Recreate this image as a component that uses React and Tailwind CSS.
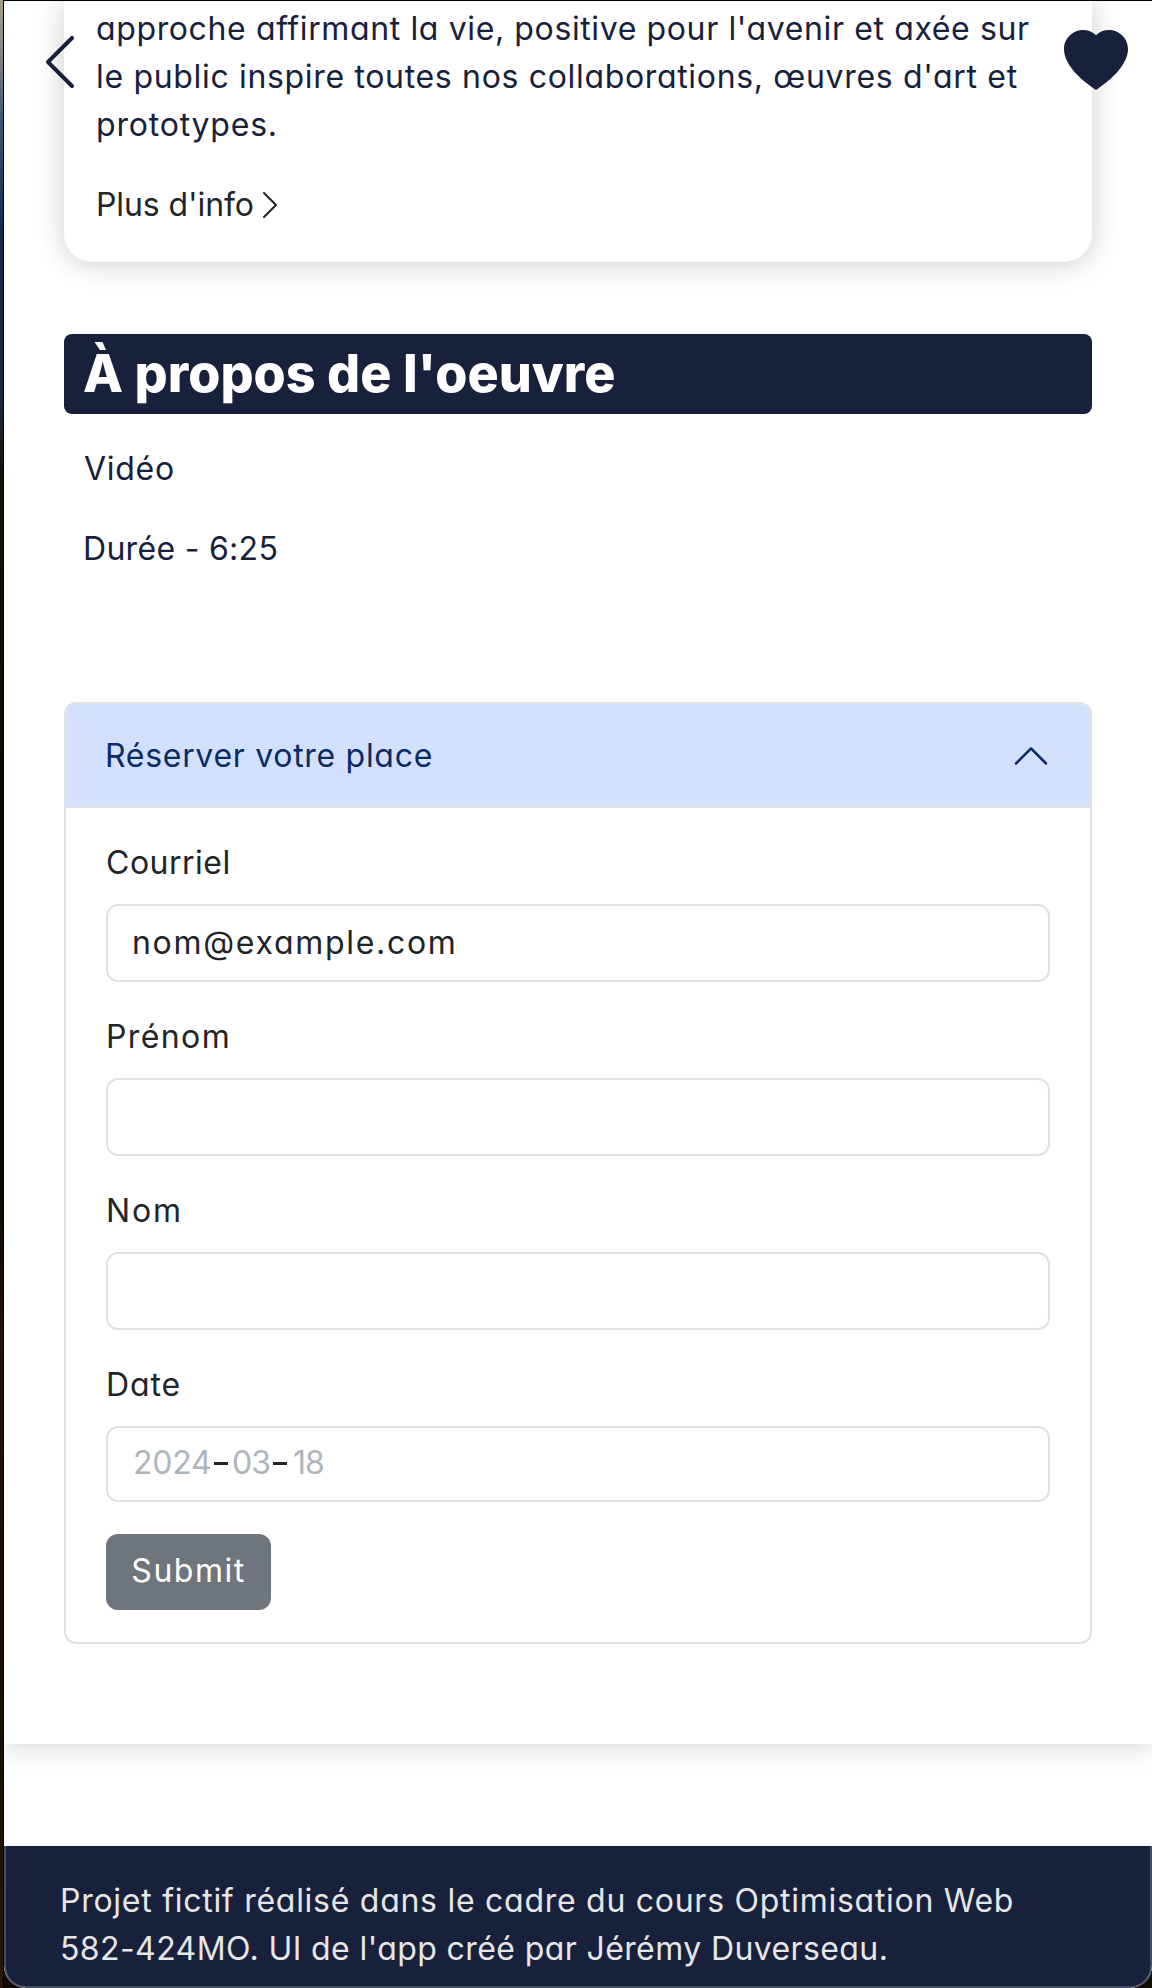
import { BsChevronLeft, BsChevronRight, BsChevronUp, BsHeartFill } from 'react-icons/bs'

function Field({ label, labelClass, children }) {
  return (
    <div className="mb-[31px]">
      <div className={`mb-[17px] ${labelClass}`}>{label}</div>
      <div className="flex h-[78px] items-center rounded-xl border-2 border-[#dee2e6] pl-[25px]">{children}</div>
    </div>
  )
}

export default function App() {
  return (
    <div className="relative flex h-[1988px] w-[1152px] overflow-hidden bg-[#120c06] font-['Inter',sans-serif] text-[32px] leading-[48px] whitespace-nowrap text-[#212529] [font-feature-settings:'cv11']">
      <div className="w-[3px] shrink-0 bg-[linear-gradient(#a39c8c_0px,#8d8a84_45px,#3d5578_120px,#17284e_230px,#1d2740_400px,#14140c_470px,#0b0a02_800px,#0d0a04_1200px,#24120b_1330px,#161104_1750px,#2a160b_1988px)]" />
      <div className="w-px shrink-0 bg-black" />
      <div className="flex w-[1148px] flex-col overflow-hidden rounded-b-[22px] border-t border-black bg-white">
        <main className="h-[1743px] shrink-0 px-[60px] shadow-[0_2px_26px_rgba(0,0,0,0.18)]">
          <section className="h-[261px] w-[1028px] rounded-b-[28px] px-8 pt-1 text-[#18213c] shadow-[0_2px_28px_rgba(0,0,0,0.2)]">
            <p className="tracking-[0.62px]">approche affirmant la vie, positive pour l'avenir et axée sur</p>
            <p className="tracking-[0.67px]">le public inspire toutes nos collaborations, œuvres d'art et</p>
            <p className="tracking-[0.8px]">prototypes.</p>
            <a className="mt-8 flex items-center text-[#212529]">
              <span className="w-[158px] tracking-[-0.1px]">Plus d'info</span>
              <BsChevronRight className="size-8" />
            </a>
          </section>

          <h2 className="mt-[72px] flex h-20 w-[1028px] items-center rounded-lg bg-[#18213c] pl-[19px] text-[52px] leading-[80px] font-extrabold tracking-[0.05px] text-white">À propos de l'oeuvre</h2>
          <p className="mt-[31px] pl-5 tracking-[0.7px] text-[#18213c]">Vidéo</p>
          <p className="mt-8 pl-[19px] tracking-[0.3px] text-[#18213c]">Durée - 6:25</p>

          <section className="mt-[129px] h-[942px] w-[1028px] overflow-hidden rounded-xl border-2 border-[#dee2e6]">
            <button className="flex h-[104px] w-full items-center justify-between border-b-2 border-[#dee2e6] bg-[#d3e0fc] pt-[2px] pr-[39px] pl-[39px] text-[#0c2a66]">
              <span className="tracking-[0.7px]">Réserver votre place</span>
              <BsChevronUp className="size-10" />
            </button>
            <form className="px-10 pt-[31px]">
              <Field label="Courriel" labelClass="tracking-[0.5px]">
                <span className="-ml-px tracking-[1.7px]">nom@example.com</span>
              </Field>
              <Field label="Prénom" labelClass="tracking-[1.4px]" />
              <Field label="Nom" labelClass="tracking-[1.9px]" />
              <div className="mb-[17px] tracking-[0.9px]">Date</div>
              <div className="flex h-[76px] items-center rounded-xl border-2 border-[#dee2e6] pb-[2px] pl-[25px] text-[#adb5bd]">
                <span className="w-[81px] tracking-[-0.2px]">2024</span>
                <span className="mr-[4px] h-[3px] w-[14px] bg-[#212529]" />
                <span className="w-[41px] tracking-[-1px]">03</span>
                <span className="mr-[6px] h-[3px] w-[14px] bg-[#212529]" />
                <span className="tracking-[-1px]">18</span>
              </div>
              <button className="mt-8 flex h-[76px] w-[165px] items-center justify-center rounded-xl bg-[#6f757d] pb-[2px] tracking-[1.5px] text-white">Submit</button>
            </form>
          </section>
        </main>
        <footer className="mt-[102px] h-[142px] shrink-0 rounded-b-[22px] border-2 border-t-0 border-[#454d63] bg-[#18213c] pt-[31px] pl-[54px] text-[#e6e6e6]">
          <p className="tracking-[0.73px]">Projet fictif réalisé dans le cadre du cours Optimisation Web</p>
          <p className="tracking-[0.4px]">582-424MO. UI de l'app créé par Jérémy Duverseau.</p>
        </footer>
      </div>
      <BsChevronLeft className="absolute top-[30px] left-7 size-16 text-[#18213c]" />
      <BsHeartFill className="absolute top-[30px] right-6 size-16 text-[#18213c]" />
    </div>
  )
}
